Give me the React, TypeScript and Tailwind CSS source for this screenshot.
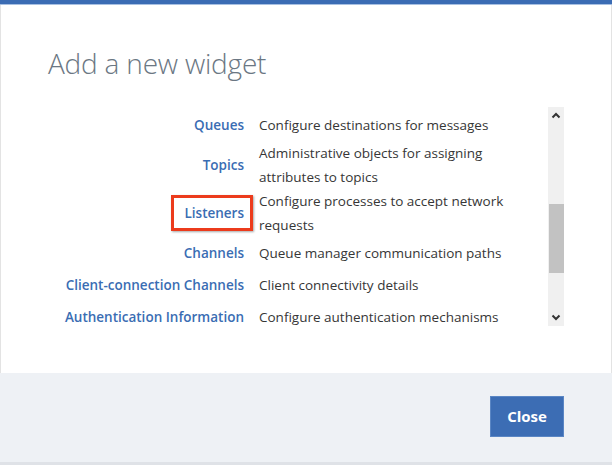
import React from "react";

const rows = [
  { name: "Queues", desc: "Configure destinations for messages" },
  { name: "Topics", desc: "Administrative objects for assigning attributes to topics" },
  { name: "Listeners", desc: "Configure processes to accept network requests", marked: true },
  { name: "Channels", desc: "Queue manager communication paths" },
  { name: "Client-connection Channels", desc: "Client connectivity details" },
  { name: "Authentication Information", desc: "Configure authentication mechanisms" },
];

const font = { fontFamily: '"Open Sans", "Noto Sans", sans-serif' };

const Chevron = ({ up }: { up?: boolean }) => (
  <svg width="10" height="7" viewBox="0 0 10 7" className={up ? "" : "rotate-180"}>
    <path d="M1.5 5.5 L5 2 L8.5 5.5" fill="none" stroke="#333" strokeWidth="2" />
  </svg>
);

export default function App() {
  return (
    <div className="w-[612px] h-[465px] flex flex-col bg-white" style={font}>
      <div className="h-[4px] bg-[#3b6cb4]" />
      <div className="h-px bg-[#a8c0e2]" />
      <div className="flex-1 flex flex-col border-l border-r border-[#e3e3e3]">
        <h1 className="ml-[47px] mt-[40px] text-[28px] leading-[36px] font-light text-[#6b7783] tracking-[-0.2px]">
          Add a new widget
        </h1>
        <div className="ml-[47px] mr-[47px] mt-[26px] h-[219px] flex">
          <div className="flex-1 overflow-hidden pt-[2px]">
            {rows.map((r) => (
              <div key={r.name} className="flex items-center min-h-[32px]">
                <div className="w-[211px] pr-[15px] text-right shrink-0">
                  <span className="relative inline-block align-top text-[13.5px] leading-[24px] font-semibold text-[#3a6db3]">
                    {r.name}
                    {r.marked && (
                      <span className="absolute left-[-13px] right-[-9px] top-[-6px] bottom-[-6px] border-[3px] border-[#ec3b1c] shadow-[1px_1px_2px_rgba(0,0,0,0.35)]" />
                    )}
                  </span>
                </div>
                <div className="w-[270px] text-[13.5px] leading-[24px] text-[#363636]">{r.desc}</div>
              </div>
            ))}
          </div>
          <div className="w-[16px] bg-[#f0f0f0] flex flex-col items-center">
            <div className="h-[17px] flex items-center justify-center">
              <Chevron up />
            </div>
            <div className="h-[80px]" />
            <div className="w-[15px] h-[69px] bg-[#c2c2c2]" />
            <div className="flex-1" />
            <div className="h-[17px] flex items-center justify-center">
              <Chevron />
            </div>
          </div>
        </div>
      </div>
      <div className="h-[89px] bg-[#eef1f5] flex justify-end items-start pt-[23px] pr-[48px]">
        <button className="w-[74px] h-[41px] bg-[#3c6db4] text-white text-[15px] font-bold border border-[#5a86c4]">
          Close
        </button>
      </div>
      <div className="h-[3px] bg-[#dfe2e7]" />
    </div>
  );
}
